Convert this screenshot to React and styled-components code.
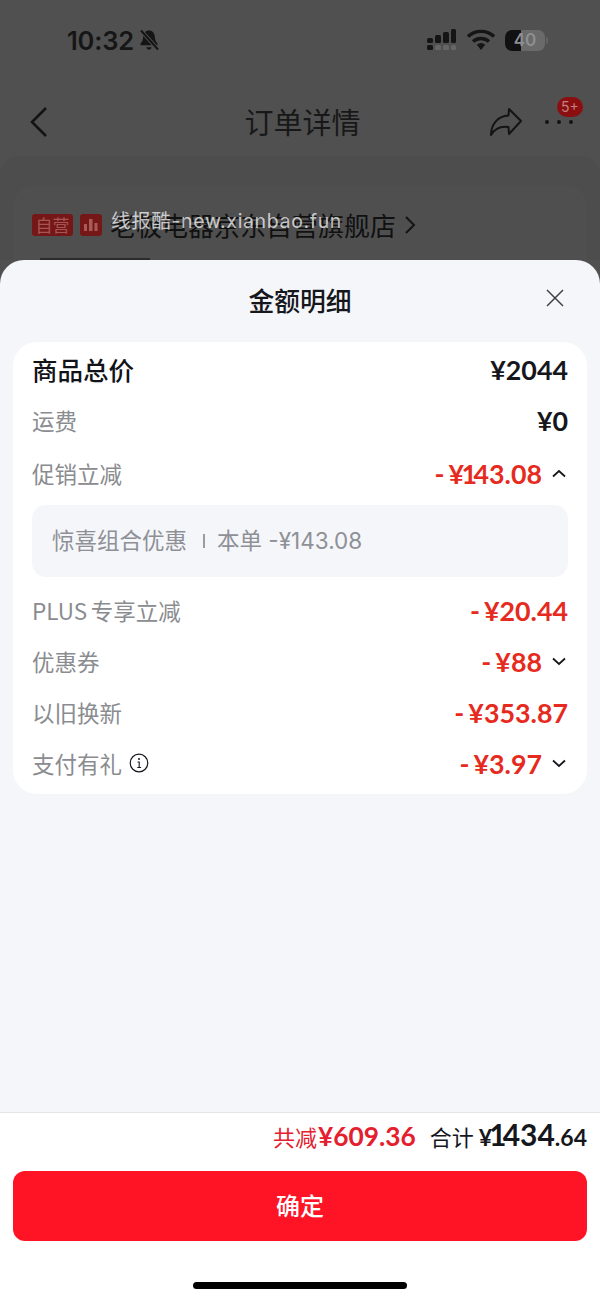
import React from 'react';
import styled, { createGlobalStyle } from 'styled-components';

const SANS = '"Noto Sans CJK SC", "Noto Sans", sans-serif';
const NUM = 'Lato, "Noto Sans CJK SC", sans-serif';

const rows = [
  { label: 'PLUS 专享立减', value: '¥20.44', top: 10 },
  { label: '优惠券', value: '¥88', arrow: 'down', top: 1 },
  { label: '以旧换新', value: '¥353.87', top: 1 },
  { label: '支付有礼', value: '¥3.97', arrow: 'down', info: true, top: 1 },
];

// the app's number font has a narrow 1, Lato's is as wide as the other digits
function Digits({ value }) {
  return value.split('').map((char, index) => (
    char === '1' ? <NarrowOne key={index}>1</NarrowOne> : char
  ));
}

function Chevron({ up }) {
  return (
    <ArrowIcon viewBox="0 0 14 9">
      <path d={up ? 'M1 7.500 L7 2 L13 7.500' : 'M1 1.500 L7 7 L13 1.500'} fill="none" stroke="#15171c" strokeWidth="1.800" />
    </ArrowIcon>
  );
}

function Amount({ value, arrow }) {
  return (
    <AmountWrap>
      <RedAmount><Minus>-</Minus><Digits value={value} /></RedAmount>
      {arrow && <Chevron up={arrow === 'up'} />}
    </AmountWrap>
  );
}

export default function App() {
  return (
    <Page>
      <GlobalStyle />
      <Backdrop>
        <StatusBar>
          <Time>
            10:32
            <svg width="22" height="24" viewBox="0 0 22 24">
              <path d="M11 2.500c-3.600 0-5.600 2.700-5.800 6-.2 3.400-1.100 5.400-2.700 7v1.800h17v-1.800c-1.600-1.600-2.500-3.600-2.700-7-.2-3.300-2.200-6-5.800-6z" fill="#151515" />
              <path d="M8.400 19.200c.3 1.500 1.300 2.300 2.600 2.300s2.300-.8 2.600-2.300z" fill="#151515" />
              <path d="M3 2.500 L20 21.500" stroke="#505050" strokeWidth="4" />
              <path d="M3 2.500 L20 21.500" stroke="#151515" strokeWidth="2" />
            </svg>
          </Time>
          <StatusIcons>
            <svg width="31" height="22" viewBox="0 0 31 22">
              <rect x="1" y="9" width="6" height="5" rx="1.500" fill="#151515" />
              <rect x="9" y="6" width="6" height="8" rx="1.500" fill="#151515" />
              <rect x="17" y="3" width="6" height="11" rx="1.500" fill="#151515" />
              <rect x="25" y="0" width="5" height="14" rx="1.500" fill="#151515" />
              <rect x="1" y="16" width="6" height="5" rx="1.500" fill="#151515" />
              <rect x="9" y="16" width="6" height="5" rx="1.500" fill="#666" />
              <rect x="17" y="16" width="6" height="5" rx="1.500" fill="#666" />
              <rect x="25" y="16" width="5" height="5" rx="1.500" fill="#666" />
            </svg>
            <svg width="28" height="22" viewBox="0 0 28 22">
              <path d="M1 7.500a19 19 0 0 1 26 0" fill="none" stroke="#151515" strokeWidth="3.400" />
              <path d="M6 12.500a12 12 0 0 1 16 0" fill="none" stroke="#151515" strokeWidth="3.400" />
              <path d="M9.800 15.800a6 6 0 0 1 8.400 0L14 21z" fill="#151515" />
            </svg>
            <BatteryWrap>
              <Battery>
                <BatteryFill />
                <BatteryLabel>40</BatteryLabel>
              </Battery>
              <BatteryNub />
            </BatteryWrap>
          </StatusIcons>
        </StatusBar>
        <NavBar>
          <svg width="20" height="32" viewBox="0 0 20 32">
            <path d="M17 2 L3 16 L17 30" fill="none" stroke="#141414" strokeWidth="2.600" />
          </svg>
          <NavTitle>订单详情</NavTitle>
          <NavActions>
            <svg width="34" height="30" viewBox="0 0 34 30">
              <path d="M20 2 L32 14 L20 27 L19.500 20 C12 19 6 21 2 28 C2 17 9 9 19.500 8.500 Z" fill="none" stroke="#141414" strokeWidth="2" strokeLinejoin="round" />
            </svg>
            <MoreButton>
              <Dot /><Dot /><Dot />
              <Badge>5+</Badge>
            </MoreButton>
          </NavActions>
        </NavBar>
        <Underlay>
          <StoreCard>
            <StoreRow>
              <StoreTag>自营</StoreTag>
              <StoreIcon>
                <svg width="14" height="12" viewBox="0 0 14 12">
                  <rect x="0" y="5" width="3" height="7" fill="#a85a58" />
                  <rect x="5" y="0" width="3.500" height="12" fill="#a85a58" />
                  <rect x="10.500" y="4" width="3" height="8" fill="#a85a58" />
                </svg>
              </StoreIcon>
              <StoreName>老板电器京东自营旗舰店</StoreName>
              <svg width="12" height="20" viewBox="0 0 12 20">
                <path d="M2 2 L10 10 L2 18" fill="none" stroke="#141414" strokeWidth="2" />
              </svg>
            </StoreRow>
            <Thumbs>
              <ThumbEdge />
            </Thumbs>
          </StoreCard>
        </Underlay>
        <Watermark>线报酷-new.xianbao.fun</Watermark>
      </Backdrop>

      <Sheet>
        <SheetHeader>
          <SheetTitle>金额明细</SheetTitle>
          <CloseButton>
            <svg width="20" height="20" viewBox="0 0 20 20">
              <path d="M2 2 L18 18 M18 2 L2 18" stroke="#3d4046" strokeWidth="1.500" />
            </svg>
          </CloseButton>
        </SheetHeader>

        <DetailCard>
          <Row>
            <TotalLabel>商品总价</TotalLabel>
            <DarkAmount>¥2044</DarkAmount>
          </Row>
          <Row $top={1}>
            <Label>运费</Label>
            <DarkAmount>¥0</DarkAmount>
          </Row>
          <Row $top={3}>
            <Label>促销立减</Label>
            <Amount value="¥143.08" arrow="up" />
          </Row>
          <PromoBox>
            惊喜组合优惠
            <PromoSplit />
            本单 -¥143.08
          </PromoBox>
          {rows.map((row) => (
            <Row key={row.label} $top={row.top}>
              <Label>
                {row.label}
                {row.info && (
                  <InfoIcon width="20" height="20" viewBox="0 0 20 20">
                    <circle cx="10" cy="10" r="8.800" fill="none" stroke="#15171c" strokeWidth="1.200" />
                    <circle cx="10" cy="6" r="1" fill="#15171c" />
                    <path d="M8.500 9h1.700v5.500M8.300 14.500h3.800" fill="none" stroke="#15171c" strokeWidth="1.100" />
                  </InfoIcon>
                )}
              </Label>
              <Amount value={row.value} arrow={row.arrow} />
            </Row>
          ))}
        </DetailCard>

        <Footer>
          <Summary>
            <SavedLabel>共减</SavedLabel>
            <SavedValue>¥609.36</SavedValue>
            <SumLabel>合计</SumLabel>
            <SumYen>¥</SumYen>
            <SumInt><Digits value="1434" /></SumInt>
            <SumDec>.64</SumDec>
          </Summary>
          <ConfirmButton>确定</ConfirmButton>
          <HomeBar />
        </Footer>
      </Sheet>
    </Page>
  );
}

const GlobalStyle = createGlobalStyle`
  html, body {
    margin: 0;
    padding: 0;
    background: #f5f6fa;
  }

  * {
    box-sizing: border-box;
  }
`;

const Page = styled.div`
  width: 600px;
  height: 1300px;
  display: flex;
  flex-direction: column;
  overflow: hidden;
  position: relative;
  background: #505050;
  font-family: ${SANS};
`;

const Backdrop = styled.div`
  height: 260px;
  flex: none;
  position: relative;
  background: #505050;
`;

const StatusBar = styled.div`
  height: 80px;
  padding: 0 52px 0 67px;
  display: flex;
  align-items: center;
  justify-content: space-between;
`;

const Time = styled.div`
  display: flex;
  align-items: center;
  gap: 4px;
  font-family: Inter, sans-serif;
  font-size: 25.500px;
  font-weight: 600;
  letter-spacing: -0.2px;
  color: #161616;
`;

const StatusIcons = styled.div`
  display: flex;
  align-items: center;
  gap: 10px;
`;

const BatteryWrap = styled.div`
  display: flex;
  align-items: center;
  gap: 1px;
`;

const Battery = styled.div`
  width: 40px;
  height: 21px;
  border-radius: 7px;
  background: #6a6a6a;
  overflow: hidden;
  position: relative;
  display: flex;
  align-items: center;
  justify-content: center;
`;

const BatteryNub = styled.span`
  width: 2px;
  height: 7px;
  border-radius: 0 2px 2px 0;
  background: #636363;
`;

const BatteryFill = styled.div`
  position: absolute;
  left: 0;
  top: 0;
  bottom: 0;
  width: 16px;
  background: #111;
`;

const BatteryLabel = styled.span`
  position: relative;
  font-family: Inter, sans-serif;
  font-size: 17px;
  font-weight: 600;
  color: #8f8f8f;
`;

const NavBar = styled.div`
  height: 76px;
  padding: 8px 27px 0 29px;
  display: flex;
  align-items: center;
  position: relative;
`;

const NavTitle = styled.div`
  position: absolute;
  left: 0;
  right: 0;
  top: 3px;
  text-align: center;
  font-size: 29px;
  color: #181818;
  line-height: 76px;
  padding-left: 5px;
`;

const NavActions = styled.div`
  margin-left: auto;
  display: flex;
  align-items: center;
  gap: 22px;
`;

const MoreButton = styled.div`
  display: flex;
  align-items: center;
  gap: 8px;
  position: relative;
`;

const Dot = styled.span`
  width: 4px;
  height: 4px;
  border-radius: 50%;
  background: #141414;
`;

const Badge = styled.span`
  position: absolute;
  left: 12px;
  top: -23px;
  width: 26px;
  height: 20px;
  border-radius: 10px;
  background: #8b0f10;
  color: #c48080;
  font-family: Inter, sans-serif;
  font-size: 14px;
  line-height: 20px;
  text-align: center;
`;

const Underlay = styled.div`
  height: 104px;
  border-radius: 18px 18px 0 0;
  background: #4d4d4e;
  padding: 30px 13px 0;
`;

const StoreCard = styled.div`
  height: 74px;
  border-radius: 20px 20px 0 0;
  background: #4f4f50;
  padding: 26px 19px 0;
  display: flex;
  flex-direction: column;
  justify-content: space-between;
`;

const StoreRow = styled.div`
  display: flex;
  align-items: center;
  height: 26px;
`;

const StoreTag = styled.span`
  width: 41px;
  height: 22px;
  border-radius: 3px;
  background: #751717;
  color: #a55555;
  font-size: 17px;
  line-height: 22px;
  text-align: center;
`;

const StoreIcon = styled.span`
  width: 22px;
  height: 22px;
  margin-left: 7px;
  border-radius: 3px;
  background: #751717;
  display: flex;
  align-items: center;
  justify-content: center;
`;

const StoreName = styled.span`
  margin: 0 8px;
  font-size: 26px;
  line-height: 26px;
  white-space: nowrap;
  color: #111;
`;

const Thumbs = styled.div`
  height: 2px;
  padding-left: 8px;
`;

const ThumbEdge = styled.div`
  width: 110px;
  height: 2px;
  background: #2c2c2c;
`;

const Watermark = styled.div`
  position: absolute;
  left: 111px;
  top: 207px;
  font-family: Inter, "Noto Sans CJK SC", sans-serif;
  font-size: 19.500px;
  letter-spacing: 0.650px;
  line-height: 28px;
  white-space: nowrap;
  color: rgba(255, 255, 255, 0.72);
`;

const Sheet = styled.div`
  flex: 1;
  display: flex;
  flex-direction: column;
  border-radius: 24px 24px 0 0;
  overflow: hidden;
  background: #f5f6fa;
  position: relative;
`;

const SheetHeader = styled.div`
  height: 82px;
  flex: none;
  display: flex;
  align-items: center;
  justify-content: center;
  position: relative;
`;

const SheetTitle = styled.div`
  padding-bottom: 4px;
  font-size: 25.800px;
  font-weight: 500;
  color: #15171c;
`;

const CloseButton = styled.div`
  position: absolute;
  right: 35px;
  top: 28px;
  width: 20px;
  height: 20px;
`;

const DetailCard = styled.div`
  margin: 0 13px;
  padding: 4px 19px;
  border-radius: 24px;
  background: #fff;
`;

const Row = styled.div`
  height: 50px;
  margin-top: ${(props) => props.$top || 0}px;
  display: flex;
  align-items: center;
  justify-content: space-between;
`;

const TotalLabel = styled.span`
  padding-bottom: 6px;
  font-size: 25.500px;
  font-weight: 500;
  color: #111318;
`;

const Label = styled.span`
  padding-bottom: 4px;
  display: flex;
  align-items: center;
  font-size: 22.500px;
  word-spacing: -1.500px;
  color: #8a8c90;
`;

const InfoIcon = styled.svg`
  margin-left: 7px;
`;

const NarrowOne = styled.span`
  margin-left: -0.100em;
  letter-spacing: -0.130em;
`;

const DarkAmount = styled.span`
  padding-bottom: 3px;
  font-family: ${NUM};
  font-size: 26.800px;
  font-weight: 700;
  color: #15171c;
`;

const AmountWrap = styled.span`
  display: flex;
  align-items: center;
`;

const RedAmount = styled.span`
  padding-bottom: 3px;
  font-family: ${NUM};
  font-size: 26.800px;
  font-weight: 700;
  color: #e62a20;
`;

const Minus = styled.span`
  margin-right: 4px;
`;

const ArrowIcon = styled.svg`
  width: 14px;
  height: 9px;
  margin: -4px 2px 0 10px;
`;

const PromoBox = styled.div`
  height: 72px;
  margin-top: 5px;
  padding: 0 0 4px 20px;
  border-radius: 14px;
  background: #f5f6fa;
  display: flex;
  align-items: center;
  font-family: Inter, "Noto Sans CJK SC", sans-serif;
  font-size: 22.500px;
  color: #8e9096;
`;

const PromoSplit = styled.span`
  width: 2px;
  height: 14px;
  margin: 4px 12px 0 16px;
  background: #9a9ca1;
`;

const Footer = styled.div`
  margin-top: auto;
  height: 188px;
  border-top: 1px solid #e6e6e8;
  background: #fff;
  padding: 0 13px;
  display: flex;
  flex-direction: column;
`;

const Summary = styled.div`
  height: 58px;
  flex: none;
  display: flex;
  align-items: baseline;
  justify-content: flex-end;
  padding-top: 3px;
`;

const SavedLabel = styled.span`
  font-size: 22px;
  color: #e4202e;
`;

const SavedValue = styled.span`
  margin-left: 1px;
  font-family: ${NUM};
  font-size: 26.300px;
  font-weight: 700;
  color: #e4202e;
`;

const SumLabel = styled.span`
  margin-left: 14px;
  font-size: 22px;
  color: #15171c;
`;

const SumYen = styled.span`
  margin-left: 5px;
  font-family: ${NUM};
  font-size: 23px;
  font-weight: 700;
  color: #15171c;
`;

const SumInt = styled.span`
  font-family: ${NUM};
  font-size: 30px;
  font-weight: 700;
  color: #15171c;
`;

const SumDec = styled.span`
  font-family: ${NUM};
  font-size: 23px;
  font-weight: 700;
  color: #15171c;
`;

const ConfirmButton = styled.div`
  height: 70px;
  flex: none;
  padding-bottom: 3px;
  border-radius: 12px;
  background: #ff1426;
  color: #fff;
  font-size: 24px;
  font-weight: 500;
  display: flex;
  align-items: center;
  justify-content: center;
`;

const HomeBar = styled.div`
  width: 214px;
  height: 7px;
  margin: 41px auto 0;
  flex: none;
  border-radius: 4px;
  background: #000;
`;
